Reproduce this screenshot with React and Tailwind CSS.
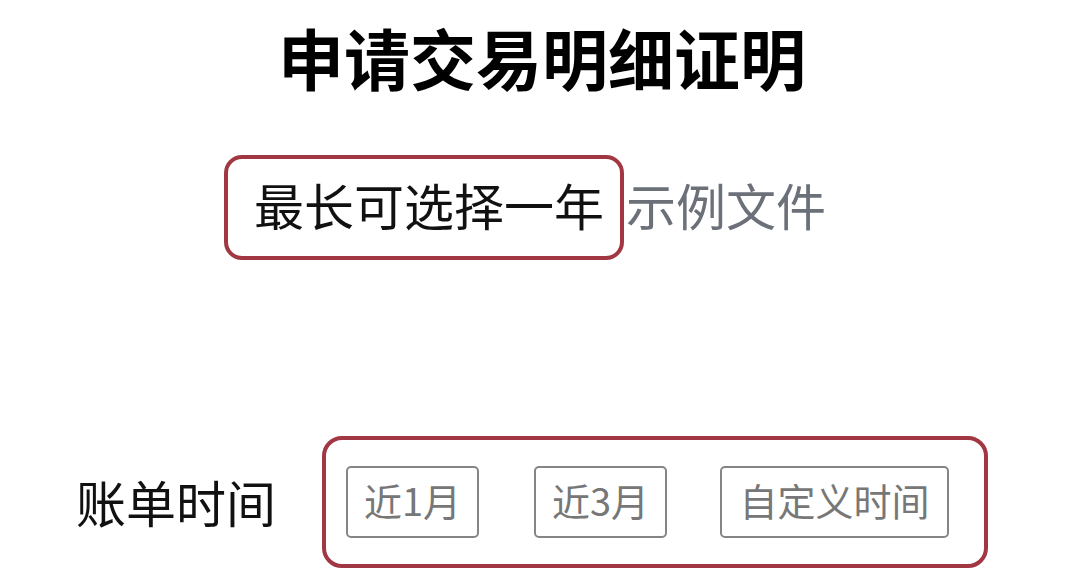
const App = () => {
  return (
    <div className="w-[1080px] h-[587px] bg-white overflow-hidden text-[#111] font-['Noto_Sans_CJK_SC','Noto_Sans',sans-serif]">
      {/* Title */}
      <h1 className="mt-[14px] text-center text-[66px] leading-[84px] font-bold text-black pl-[4px]">申请交易明细证明</h1>

      {/* Range hint */}
      <div className="flex items-center pl-[224px] mt-[57px]">
        <div className="w-[400px] h-[105px] border-4 border-[#a13743] rounded-[18px] flex items-center pl-[26px] pb-[8px]">
          <span className="text-[50px] leading-none">最长可选择一年</span>
        </div>
        <span className="ml-[2px] pb-[8px] text-[50px] leading-none text-[#6b7079]">示例文件</span>
      </div>

      {/* Bill period */}
      <div className="flex items-center pl-[76px] mt-[176px]">
        <span className="w-[246px] pb-[2px] text-[50px] leading-none">账单时间</span>
        <div className="w-[666px] h-[132px] border-4 border-[#a13743] rounded-[20px] flex items-center pl-[20px] gap-[55px]">
          <button className="w-[133px] h-[72px] border-2 border-[#858585] rounded-[5px] pb-[4px] text-[38px] leading-none text-[#777]">近1月</button>
          <button className="w-[133px] h-[72px] border-2 border-[#858585] rounded-[5px] pb-[4px] text-[38px] leading-none text-[#777]">近3月</button>
          <button className="w-[229px] h-[72px] border-2 border-[#858585] rounded-[5px] pb-[4px] text-[38px] leading-none text-[#777] -ml-[2px]">自定义时间</button>
        </div>
      </div>
    </div>
  )
}

export default App
